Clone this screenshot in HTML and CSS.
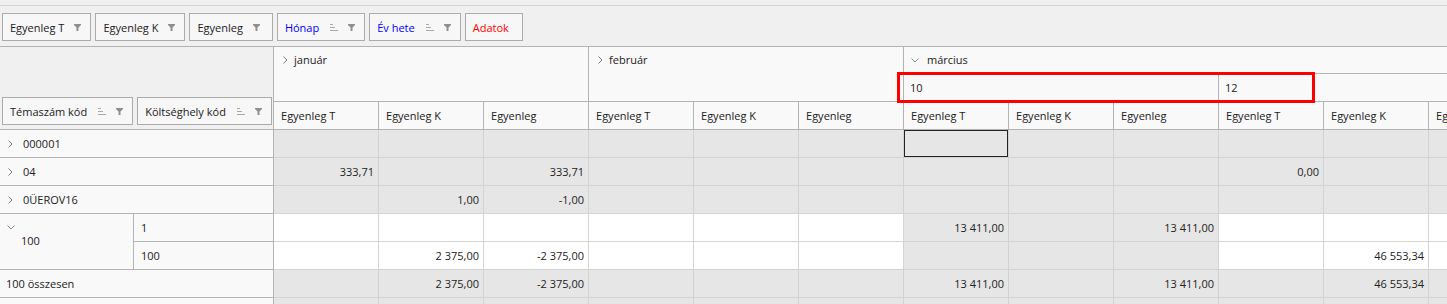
FILE: index.html
```html
<!DOCTYPE html>
<html lang="hu">
<head>
    <meta charset="UTF-8">
    <meta name="viewport" content="width=device-width, initial-scale=1.0">
    <title>Pivot</title>
    <link rel="stylesheet" href="styles.css">
</head>
<body>
<div class="toolbar">
    <span class="field">Egyenleg T<svg class="icoFilter" width="7" height="7" viewBox="0 0 7 7"><path d="M0 0h7v1L4.5 3.5V7h-2V3.5L0 1z"/></svg></span>
    <span class="field">Egyenleg K<svg class="icoFilter" width="7" height="7" viewBox="0 0 7 7"><path d="M0 0h7v1L4.5 3.5V7h-2V3.5L0 1z"/></svg></span>
    <span class="field wide">Egyenleg<svg class="icoFilter" width="7" height="7" viewBox="0 0 7 7"><path d="M0 0h7v1L4.5 3.5V7h-2V3.5L0 1z"/></svg></span>
    <span class="field blue">Hónap<svg class="icoSort" width="8" height="7" viewBox="0 0 8 7"><path d="M0 .5h3M0 3.5h5M0 6.5h8"/></svg><svg class="icoFilter" width="7" height="7" viewBox="0 0 7 7"><path d="M0 0h7v1L4.5 3.5V7h-2V3.5L0 1z"/></svg></span>
    <span class="field blue">Év hete<svg class="icoSort" width="8" height="7" viewBox="0 0 8 7"><path d="M0 .5h3M0 3.5h5M0 6.5h8"/></svg><svg class="icoFilter" width="7" height="7" viewBox="0 0 7 7"><path d="M0 0h7v1L4.5 3.5V7h-2V3.5L0 1z"/></svg></span>
    <span class="field red">Adatok</span>
</div>

<div id="pivot">
    <table class="grid">
        <colgroup>
            <col class="rh1"><col class="rh2">
            <col class="c"><col class="c"><col class="c"><col class="c"><col class="c"><col class="c">
            <col class="c"><col class="c"><col class="c"><col class="c"><col class="c"><col class="c">
        </colgroup>
        <tr class="first">
            <td class="fieldArea" colspan="2" rowspan="3">
                <div class="rowFields">
                    <span class="field">Témaszám kód<svg class="icoSort" width="8" height="7" viewBox="0 0 8 7"><path d="M0 .5h3M0 3.5h5M0 6.5h8"/></svg><svg class="icoFilter" width="7" height="7" viewBox="0 0 7 7"><path d="M0 0h7v1L4.5 3.5V7h-2V3.5L0 1z"/></svg></span>
                    <span class="field grow">Költséghely kód<svg class="icoSort" width="8" height="7" viewBox="0 0 8 7"><path d="M0 .5h3M0 3.5h5M0 6.5h8"/></svg><svg class="icoFilter" width="7" height="7" viewBox="0 0 7 7"><path d="M0 0h7v1L4.5 3.5V7h-2V3.5L0 1z"/></svg></span>
                </div>
            </td>
            <td class="month" colspan="3" rowspan="2"><svg class="chevR" width="5" height="8" viewBox="0 0 5 8"><path d="M.5.5l3.5 3.5-3.5 3.5"/></svg>január</td>
            <td class="month" colspan="3" rowspan="2"><svg class="chevR" width="5" height="8" viewBox="0 0 5 8"><path d="M.5.5l3.5 3.5-3.5 3.5"/></svg>február</td>
            <td class="month" colspan="6"><svg class="chevD" width="8" height="5" viewBox="0 0 8 5"><path d="M.5.5l3.5 3.5 3.5-3.5"/></svg>március</td>
        </tr>
        <tr>
            <td class="week" colspan="3">10</td>
            <td class="week" colspan="3">12</td>
        </tr>
        <tr>
            <td class="ms">Egyenleg T</td><td class="ms">Egyenleg K</td><td class="ms">Egyenleg</td>
            <td class="ms">Egyenleg T</td><td class="ms">Egyenleg K</td><td class="ms">Egyenleg</td>
            <td class="ms">Egyenleg T</td><td class="ms">Egyenleg K</td><td class="ms">Egyenleg</td>
            <td class="ms">Egyenleg T</td><td class="ms">Egyenleg K</td><td class="ms">Egyenleg</td>
        </tr>

        <!-- adatsorok -->
        <tr>
            <td class="rh" colspan="2"><svg class="chevR" width="5" height="8" viewBox="0 0 5 8"><path d="M.5.5l3.5 3.5-3.5 3.5"/></svg>000001</td>
            <td></td><td></td><td></td><td></td><td></td><td></td>
            <td class="sel"></td><td></td><td></td><td></td><td></td><td></td>
        </tr>
        <tr>
            <td class="rh" colspan="2"><svg class="chevR" width="5" height="8" viewBox="0 0 5 8"><path d="M.5.5l3.5 3.5-3.5 3.5"/></svg>04</td>
            <td>333,71</td><td></td><td>333,71</td><td></td><td></td><td></td>
            <td></td><td></td><td></td><td>0,00</td><td></td><td></td>
        </tr>
        <tr>
            <td class="rh" colspan="2"><svg class="chevR" width="5" height="8" viewBox="0 0 5 8"><path d="M.5.5l3.5 3.5-3.5 3.5"/></svg>0ÜEROV16</td>
            <td></td><td>1,00</td><td>-1,00</td><td></td><td></td><td></td>
            <td></td><td></td><td></td><td></td><td></td><td></td>
        </tr>
        <tr>
            <td class="rh exp" rowspan="2"><svg class="chevD" width="8" height="5" viewBox="0 0 8 5"><path d="M.5.5l3.5 3.5 3.5-3.5"/></svg><span class="expLabel">100</span></td>
            <td class="rh">1</td>
            <td class="w"></td><td class="w"></td><td class="w"></td><td class="w"></td><td class="w"></td><td class="w"></td>
            <td>13 411,00</td><td></td><td>13 411,00</td><td class="w"></td><td class="w"></td><td class="w"></td>
        </tr>
        <tr>
            <td class="rh">100</td>
            <td class="w"></td><td class="w">2 375,00</td><td class="w">-2 375,00</td><td class="w"></td><td class="w"></td><td class="w"></td>
            <td></td><td></td><td></td><td class="w"></td><td class="w">46 553,34</td><td class="w"></td>
        </tr>
        <tr>
            <td class="rh total" colspan="2">100 összesen</td>
            <td></td><td>2 375,00</td><td>-2 375,00</td><td></td><td></td><td></td>
            <td>13 411,00</td><td></td><td>13 411,00</td><td></td><td>46 553,34</td><td></td>
        </tr>
        <tr>
            <td class="rh" colspan="2"></td>
            <td></td><td></td><td></td><td></td><td></td><td></td>
            <td></td><td></td><td></td><td></td><td></td><td></td>
        </tr>
    </table>
    <div class="mark"></div>
</div>
</body>
</html>
```

FILE: styles.css
```css
html, body {
    margin: 0;
    padding: 0;
    overflow: hidden;
}
body {
    background: #f0f0f0;
    font: 11px/15px "Open Sans", "Noto Sans", sans-serif;
    color: #222;
}

/* mezők sávja */
.toolbar {
    display: flex;
    gap: 4px;
    align-items: flex-start;
    height: 41px;
    box-sizing: border-box;
    margin-top: 5px;
    padding: 7px 0 0 2px;
    border-top: 1px solid #d4d4d4;
}
.field {
    display: flex;
    align-items: center;
    flex: none;
    height: 28px;
    box-sizing: border-box;
    padding: 0 9px 0 7px;
    border: 1px solid #ababab;
    background: #f7f7f7;
    white-space: nowrap;
}
.field.wide {
    padding-right: 12px;
}
.field.blue {
    color: #0000ff;
}
.field.red {
    color: #ff0000;
    padding-right: 13px;
}
.icoSort {
    margin-left: 11px;
    fill: none;
    stroke: #a8a8a8;
}
.icoFilter {
    margin-left: 10px;
    fill: #8f8f8f;
}
.icoSort + .icoFilter {
    margin-left: 10px;
}

/* pivot tábla */
#pivot {
    position: relative;
    width: 100%;
    overflow: hidden;
}
.grid {
    border-collapse: separate;
    border-spacing: 0;
    table-layout: fixed;
    width: 1534px;
}
.grid col.rh1 { width: 134px; }
.grid col.rh2 { width: 140px; }
.grid col.c { width: 105px; }
.grid tr {
    height: 28px;
}
.grid td {
    padding: 0 4px 0 7px;
    border-right: 1px solid #d3d3d3;
    border-bottom: 1px solid #d3d3d3;
    background: #e6e6e6;
    text-align: right;
    white-space: nowrap;
    overflow: hidden;
}
.grid td.w {
    background: #fff;
}
.grid td.sel {
    box-shadow: inset 0 0 0 1px #222;
}
.grid tr.first td {
    border-top: 1px solid #b3b3b3;
}
.grid td.fieldArea {
    border-top: 0;
    border-right-color: #b3b3b3;
    border-bottom-color: #b3b3b3;
    background: transparent;
    vertical-align: bottom;
    padding: 0 4px 4px 2px;
}
.rowFields {
    display: flex;
    gap: 4px;
}
.rowFields .grow {
    flex: 1;
}
.grid td.month,
.grid td.week,
.grid td.ms,
.grid td.rh {
    background: #f9f9f9;
    border-right-color: #b3b3b3;
    border-bottom-color: #b3b3b3;
    text-align: left;
}
.grid td.month {
    vertical-align: top;
    padding-top: 5px;
}
.grid td.week {
    padding-left: 6px;
}
.chevR {
    vertical-align: middle;
    margin: -2px 10px 0 1px;
    fill: none;
    stroke: #7a7a7a;
}
.month .chevR {
    margin: -2px 6px 0 2px;
}
.chevD {
    vertical-align: middle;
    margin: -2px 8px 0 0;
    fill: none;
    stroke: #8a8a8a;
}
.grid td.exp {
    vertical-align: top;
    padding-top: 11px;
}
.exp .chevD {
    display: block;
    margin: 0;
}
.expLabel {
    display: block;
    margin-top: 3px;
    padding-left: 14px;
}
.grid td.total {
    padding-left: 6px;
}

/* kijelölés */
.mark {
    position: absolute;
    left: 897px;
    top: 26px;
    width: 418px;
    height: 31px;
    box-sizing: border-box;
    border: 3px solid #ff0000;
}
```
